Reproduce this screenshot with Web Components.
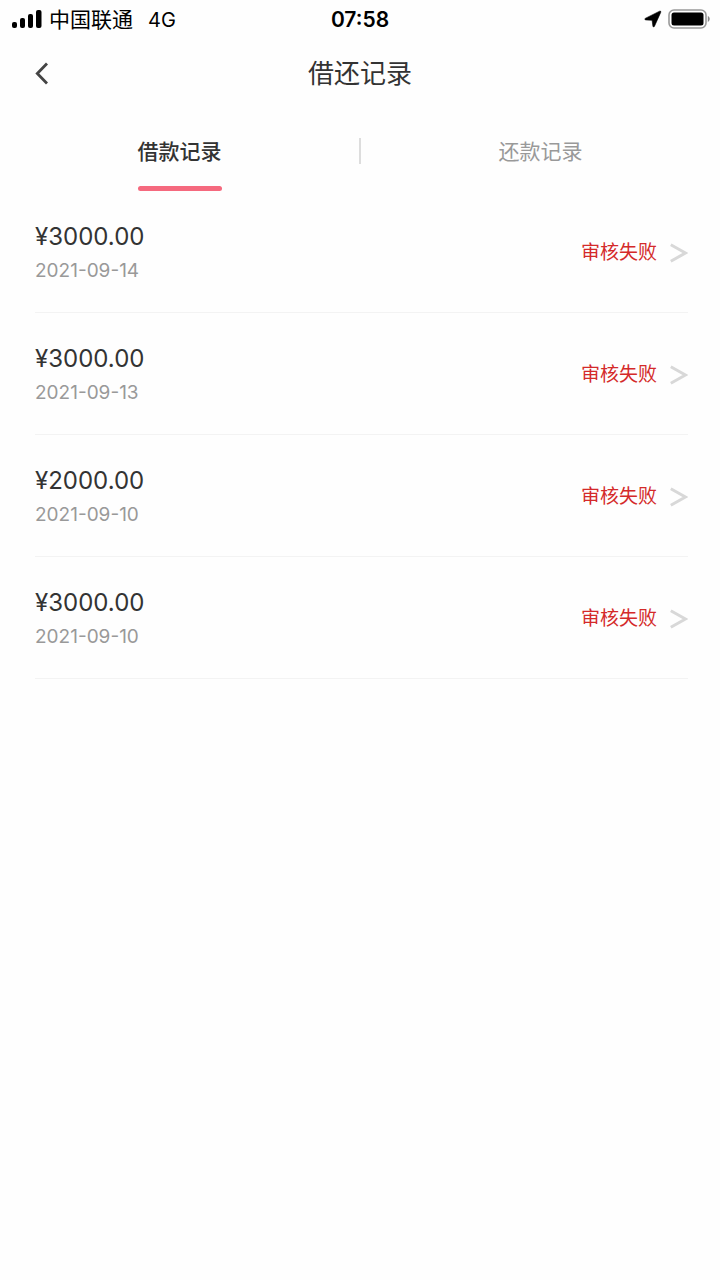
<!DOCTYPE html>
<html lang="zh-CN">
<head>
<meta charset="utf-8">
<meta name="viewport" content="width=device-width, initial-scale=1">
<title>借还记录</title>
<style>
  body { margin: 0; background: #fefefe; color: #333; font-family: Inter, "Noto Sans CJK SC", sans-serif; }
</style>
</head>
<body>
<records-page></records-page>
<script>
const define = (name, html, setup) => {
  const template = document.createElement('template');
  template.innerHTML = html;
  customElements.define(name, class extends HTMLElement {
    constructor() {
      super();
      this.attachShadow({ mode: 'open' }).append(template.content.cloneNode(true));
    }
    connectedCallback() {
      if (setup) setup(this, this.shadowRoot);
    }
  });
};

define('status-bar', `
  <style>
    :host { display: grid; grid-template-columns: 1fr auto 1fr; align-items: center; height: 36px; padding: 0 10px; color: #000; font-size: 20px; line-height: 36px; }
    .left, .right { display: flex; align-items: center; }
    .left { gap: 7px; padding-left: 2px; }
    .left, .time { padding-top: 2px; }
    .left svg { margin-bottom: 2px; }
    .net { margin-left: 8px; }
    .time { font-size: 21px; font-weight: 600; }
    .right { justify-content: flex-end; gap: 6px; }
    svg { display: block; }
    .carrier { font-size: 21px; }
  </style>
  <div class="left">
    <svg width="30" height="20" viewBox="0 0 30 20" aria-hidden="true">
      <rect x="0" y="13" width="5" height="6" rx="2"/><rect x="8" y="9" width="5" height="10" rx="2"/>
      <rect x="16" y="5" width="5" height="14" rx="2"/><rect x="24" y="1" width="5.5" height="18" rx="2"/>
    </svg>
    <span class="carrier">中国联通</span><span class="net">4G</span>
  </div>
  <div class="time">07:58</div>
  <div class="right">
    <svg width="18" height="18" viewBox="0 0 18 18" aria-hidden="true">
      <path d="M1.2 8.4 15.600 1.200q1.700-.5 1.100 1.200L10.400 16.400q-.9 1.300-1.500-.2L8.100 10.300 1.700 9.900q-1.600-.5-.5-1.500z" stroke="#000" stroke-width=".6"/>
    </svg>
    <svg width="42" height="20" viewBox="0 0 42 20" aria-hidden="true">
      <rect x="1" y="1" width="37" height="18" rx="5" fill="none" stroke="#999" stroke-width="1.6"/>
      <rect x="3.5" y="3.5" width="32" height="13" rx="2.5"/>
      <path d="M39.8 6.8q4 3.2 0 6.4z" fill="#888"/>
    </svg>
  </div>`);

define('nav-header', `
  <style>
    :host { display: grid; grid-template-columns: 48px 1fr 48px; align-items: center; height: 74px; padding: 0 18px; }
    button { display: grid; place-items: center; width: 48px; height: 48px; padding: 0; border: 0; background: none; }
    h1 { margin: 0; padding-top: 2px; text-align: center; font-size: 26px; line-height: 36px; font-weight: 400; }
  </style>
  <button type="button" aria-label="返回">
    <svg width="14" height="24" viewBox="0 0 14 24" fill="none" stroke="#444" stroke-width="2.8" aria-hidden="true"><path d="M12 2.500 2.300 12.500 12 22.500"/></svg>
  </button>
  <h1><slot></slot></h1>`);

define('record-tab', `
  <style>
    :host { display: flex; justify-content: center; flex: 1 1 0; }
    button { display: grid; grid-template-rows: 1fr 5px; height: 81px; padding: 7px 0 0; border: 0; background: none; font: inherit; font-size: 21px; color: #999; }
    .label { align-self: center; line-height: 32px; }
    .bar { width: 100%; height: 5px; border-radius: 3px; }
    :host([selected]) button { color: #333; font-weight: 500; }
    :host([selected]) .bar { background: #f5697e; }
  </style>
  <button type="button" role="tab"><span class="label"><slot></slot></span><span class="bar"></span></button>`,
  (host, root) => root.querySelector('button').setAttribute('aria-selected', host.hasAttribute('selected')));

define('record-tabs', `
  <style>
    :host { display: flex; align-items: center; height: 81px; }
    .divider { order: 1; width: 2px; height: 26px; background: #ddd; }
    ::slotted(:last-child) { order: 2; }
  </style>
  <slot></slot><span class="divider"></span>`,
  host => host.setAttribute('role', 'tablist'));

define('record-row', `
  <style>
    :host { display: block; border-bottom: 1px solid #f3f3f3; }
    a { display: flex; align-items: center; justify-content: space-between; box-sizing: border-box; height: 121px; padding-top: 2px; color: inherit; text-decoration: none; }
    .info { padding-top: 2px; }
    .amount { font-size: 24px; line-height: 34px; }
    .date { font-size: 19px; line-height: 34px; color: #999; }
    .state { display: flex; align-items: center; gap: 13px; font-size: 19px; line-height: 28px; color: #d42a2a; }
    svg { display: block; }
  </style>
  <a href="#">
    <div class="info"><div class="amount"><slot name="amount"></slot></div><div class="date"><slot name="date"></slot></div></div>
    <div class="state"><slot></slot>
      <svg width="18" height="20" viewBox="0 0 18 20" fill="none" stroke="#d8d8d8" stroke-width="3" aria-hidden="true"><path d="M.8 1.800 15.500 10 .8 18.200"/></svg>
    </div>
  </a>`);

define('records-page', `
  <style>
    :host { display: block; }
    main { padding: 0 32px 0 35px; }
  </style>
  <status-bar></status-bar>
  <nav-header>借还记录</nav-header>
  <record-tabs><record-tab selected>借款记录</record-tab><record-tab>还款记录</record-tab></record-tabs>
  <main>
    <record-row><span slot="amount">¥3000.00</span><span slot="date">2021-09-14</span>审核失败</record-row>
    <record-row><span slot="amount">¥3000.00</span><span slot="date">2021-09-13</span>审核失败</record-row>
    <record-row><span slot="amount">¥2000.00</span><span slot="date">2021-09-10</span>审核失败</record-row>
    <record-row><span slot="amount">¥3000.00</span><span slot="date">2021-09-10</span>审核失败</record-row>
  </main>`);
</script>
</body>
</html>
